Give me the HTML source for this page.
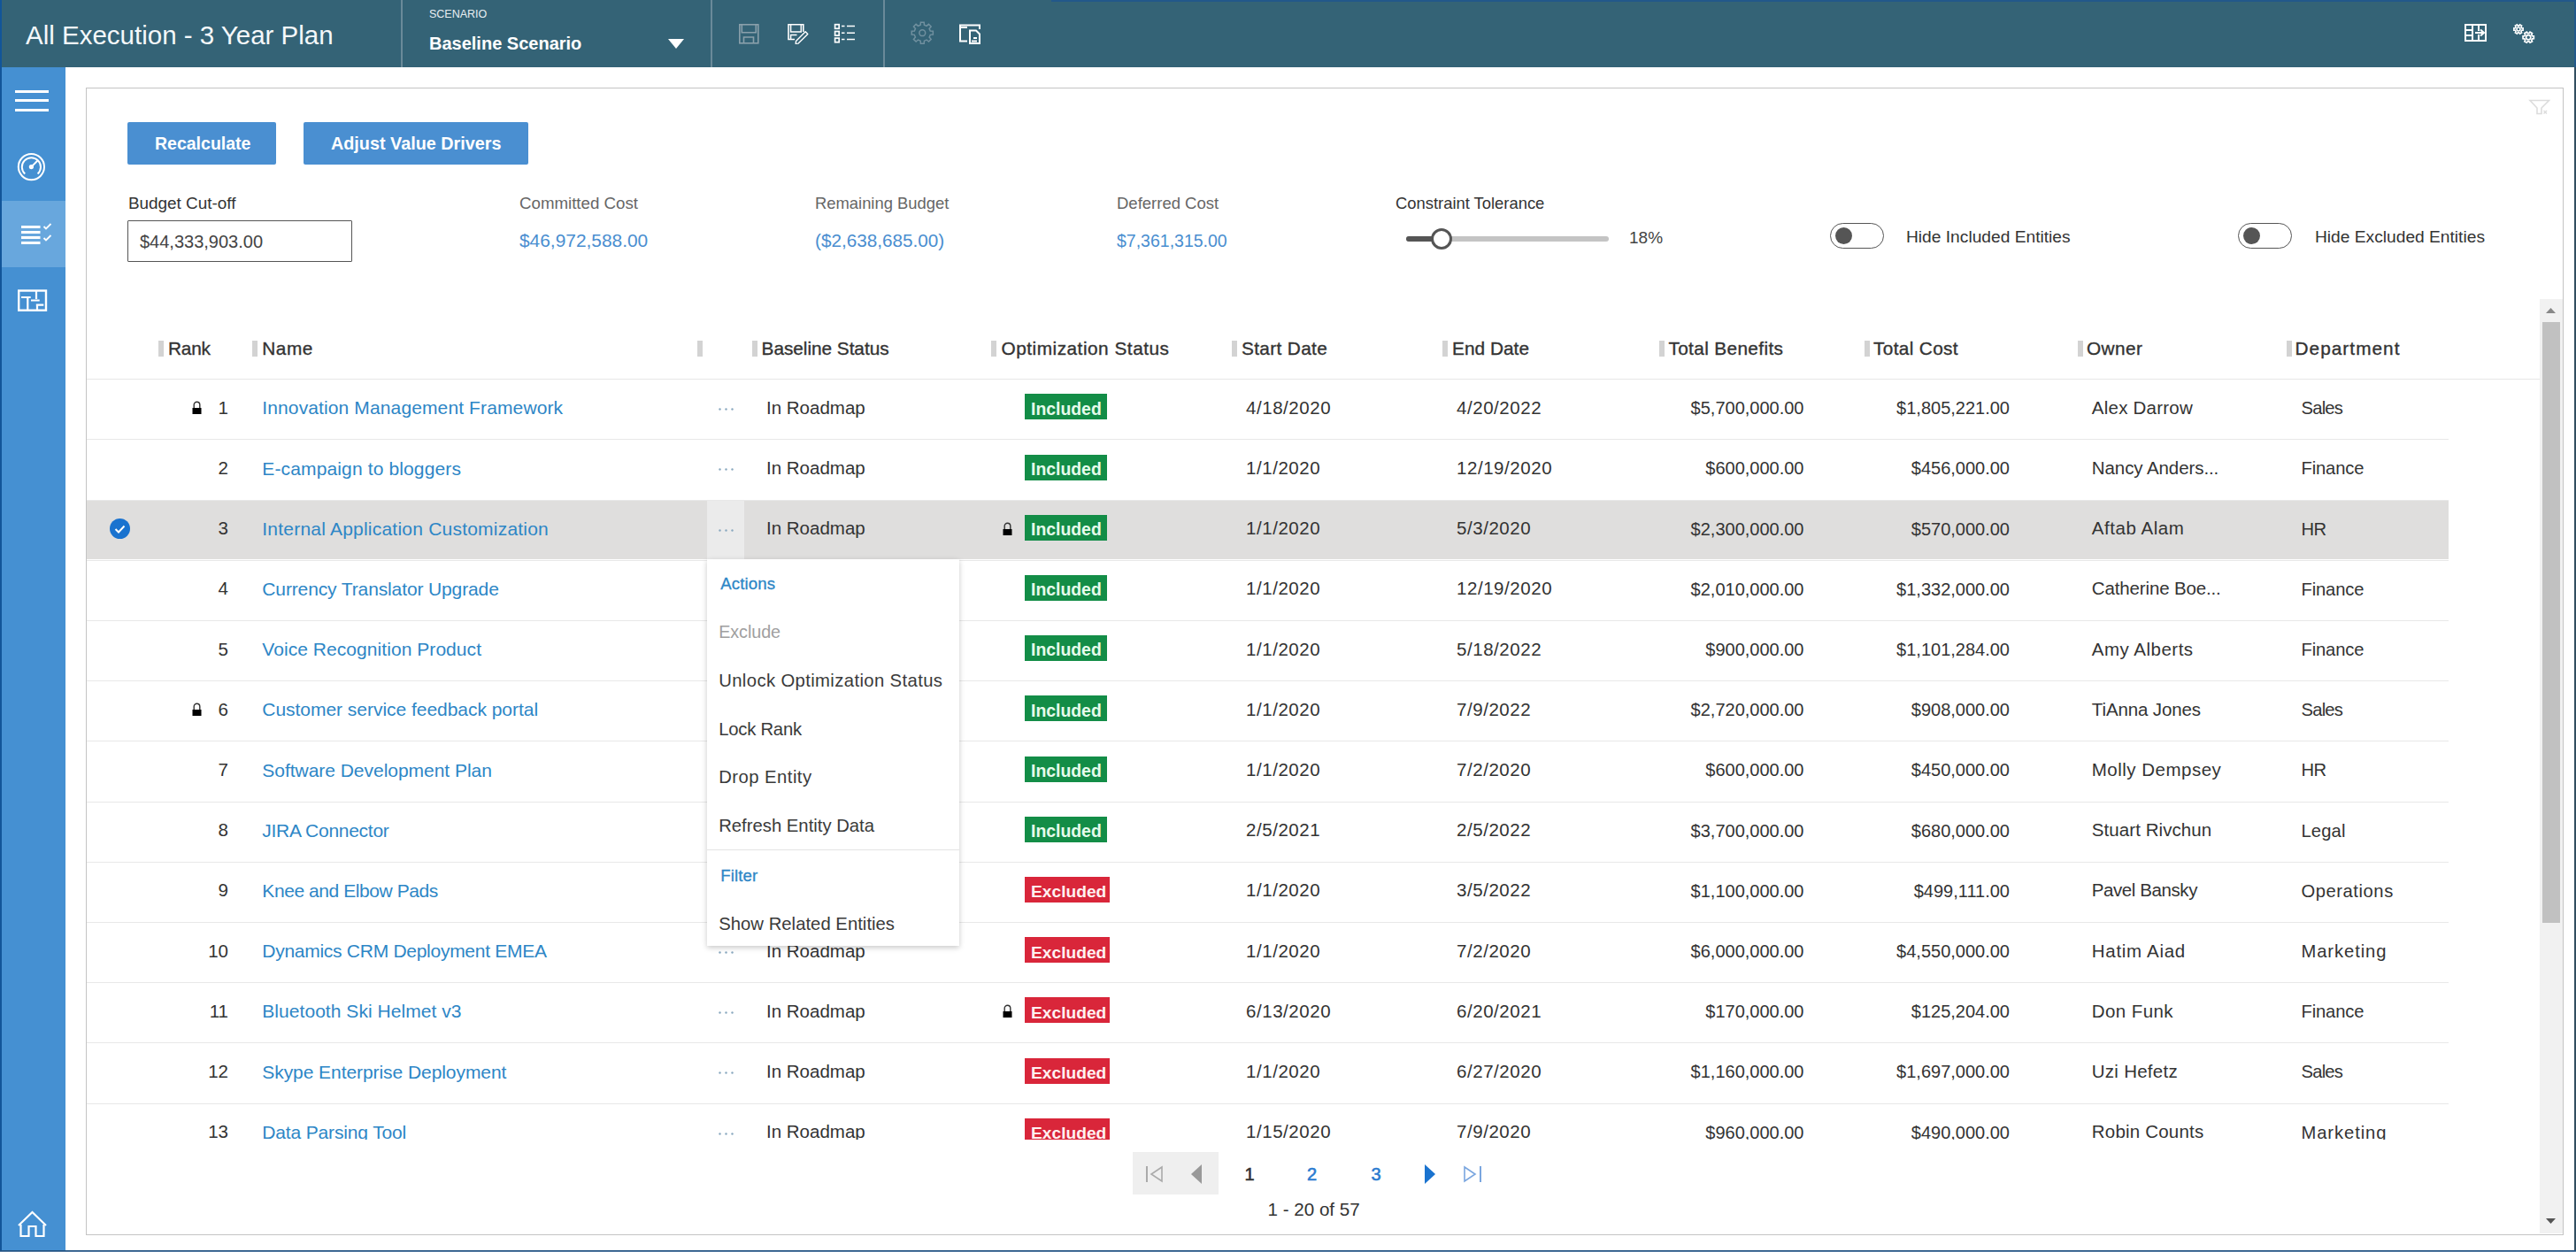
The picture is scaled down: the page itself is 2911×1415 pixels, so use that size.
<!DOCTYPE html>
<html><head><meta charset="utf-8"><title>All Execution - 3 Year Plan</title>
<style>
html,body{margin:0;padding:0}
body{width:2911px;height:1415px;position:relative;overflow:hidden;background:#fff;font-family:'Liberation Sans', sans-serif}
.t{position:absolute;white-space:nowrap}
.b{position:absolute}
svg{position:absolute;overflow:visible}
</style></head><body>

<div class="b" style="left:0px;top:0px;width:2911px;height:76px;background:#346376;"></div>
<div class="b" style="left:1188px;top:0px;width:1723px;height:2px;background:#22588a;"></div>
<div class="b" style="left:0px;top:76px;width:74px;height:1339px;background:#4590d2;"></div>
<div class="b" style="left:2px;top:227px;width:72px;height:75px;background:#68a7dd;"></div>
<div class="b" style="left:0px;top:0px;width:2px;height:1415px;background:#125599;"></div>
<div class="b" style="left:2909px;top:0px;width:2px;height:76px;background:#23598b;"></div>
<div class="b" style="left:2909px;top:76px;width:2px;height:1339px;background:#324f60;"></div>
<div class="b" style="left:0px;top:1413px;width:2911px;height:1px;background:#1f5080;"></div>
<div class="b" style="left:0px;top:1414px;width:2911px;height:1px;background:#5c80a6;"></div>
<div class="b" style="left:453px;top:0px;width:1.5px;height:76px;background:#6a8a99;"></div>
<div class="b" style="left:803px;top:0px;width:1.5px;height:76px;background:#6a8a99;"></div>
<div class="b" style="left:998px;top:0px;width:1.5px;height:76px;background:#6a8a99;"></div>
<div class="t" style="left:29px;top:25.03px;font-size:29.5px;line-height:29.5px;color:#f4f8fa;font-weight:normal;">All Execution - 3 Year Plan</div>
<div class="t" style="left:485px;top:10.42px;font-size:12.5px;line-height:12.5px;color:#e8eef2;font-weight:normal;">SCENARIO</div>
<div class="t" style="left:485px;top:39.07px;font-size:20px;line-height:20px;color:#ffffff;font-weight:bold;">Baseline Scenario</div>
<svg style="left:755px;top:44px" width="18" height="11"><path d="M0 0H18L9 11Z" fill="#fff"/></svg>
<svg style="left:0;top:0" width="2911" height="76"><rect x="835.8" y="27.8" width="21" height="21" fill="none" stroke="#8aa0ab" stroke-width="1.6"/><path d="M838.3 27.8V36.8H854.3V27.8" fill="none" stroke="#8aa0ab" stroke-width="1.6"/><path d="M840.5 48.8V42H851.5V48.8" fill="none" stroke="#8aa0ab" stroke-width="1.6"/><path d="M907.8 36V27.8H891V44.5H898" fill="none" stroke="#fff" stroke-width="1.6"/><path d="M893.6 27.8V36H905.3V27.8" fill="none" stroke="#fff" stroke-width="1.5"/><path d="M893.6 44.5V39.6H900.5" fill="none" stroke="#fff" stroke-width="1.5"/><path d="M899.5 46.5L910.2 35.8L912.8 38.4L902.1 49.1L899.2 49.4Z" fill="none" stroke="#fff" stroke-width="1.4" stroke-linejoin="round"/><rect x="943.6" y="27.7" width="4.6" height="4.6" fill="none" stroke="#fff" stroke-width="1.7"/><rect x="943.6" y="35.5" width="4.6" height="4.6" fill="none" stroke="#fff" stroke-width="1.7"/><rect x="943.6" y="43.1" width="4.6" height="4.6" fill="none" stroke="#fff" stroke-width="1.7"/><path d="M951 29.5H954.5M957 29.5H966M951 37.2H954.5M957 37.2H966M951 44.5H954.5M957 44.5H966" stroke="#fff" stroke-width="1.5"/><path d="M1054.35 35.29 L1054.35 39.11 L1051.25 39.35 L1050.14 42.01 L1052.17 44.37 L1049.47 47.07 L1047.11 45.04 L1044.45 46.15 L1044.21 49.25 L1040.39 49.25 L1040.15 46.15 L1037.49 45.04 L1035.13 47.07 L1032.43 44.37 L1034.46 42.01 L1033.35 39.35 L1030.25 39.11 L1030.25 35.29 L1033.35 35.05 L1034.46 32.39 L1032.43 30.03 L1035.13 27.33 L1037.49 29.36 L1040.15 28.25 L1040.39 25.15 L1044.21 25.15 L1044.45 28.25 L1047.11 29.36 L1049.47 27.33 L1052.17 30.03 L1050.14 32.39 L1051.25 35.05Z" fill="none" stroke="#70909f" stroke-width="1.5" stroke-linejoin="miter"/><circle cx="1042.3" cy="37.2" r="3.4" fill="none" stroke="#70909f" stroke-width="1.5"/><path d="M1093 46.5H1085V28.5H1107V33" fill="none" stroke="#fff" stroke-width="2"/><path d="M1085 31H1093" stroke="#fff" stroke-width="2"/><path d="M1096 34.5H1103L1107 38.5V49H1096Z" fill="none" stroke="#fff" stroke-width="2"/><path d="M1100 43H1104M1098 46.5H1104" stroke="#fff" stroke-width="1.8"/><rect x="2786" y="28" width="23" height="18" fill="none" stroke="#fff" stroke-width="2"/><path d="M2794 28V46M2786 34H2794M2786 40H2794M2801 28V35M2801 39V46" stroke="#fff" stroke-width="2"/><path d="M2797 37H2806M2803 33.5L2807 37L2803 40.5" fill="none" stroke="#fff" stroke-width="2"/><path d="M2851.16 31.79 L2851.16 34.21 L2849.67 34.32 L2848.98 35.52 L2849.63 36.86 L2847.53 38.07 L2846.69 36.84 L2845.31 36.84 L2844.47 38.07 L2842.37 36.86 L2843.02 35.52 L2842.33 34.32 L2840.84 34.21 L2840.84 31.79 L2842.33 31.68 L2843.02 30.48 L2842.37 29.14 L2844.47 27.93 L2845.31 29.16 L2846.69 29.16 L2847.53 27.93 L2849.63 29.14 L2848.98 30.48 L2849.67 31.68Z" fill="none" stroke="#fff" stroke-width="1.6" stroke-linejoin="miter"/><circle cx="2846" cy="33" r="2.0" fill="none" stroke="#fff" stroke-width="1.6"/><path d="M2863.33 40.76 L2863.33 43.64 L2861.62 43.79 L2860.79 45.23 L2861.51 46.79 L2859.02 48.23 L2858.03 46.83 L2856.37 46.83 L2855.38 48.23 L2852.89 46.79 L2853.61 45.23 L2852.78 43.79 L2851.07 43.64 L2851.07 40.76 L2852.78 40.61 L2853.61 39.17 L2852.89 37.61 L2855.38 36.17 L2856.37 37.57 L2858.03 37.57 L2859.02 36.17 L2861.51 37.61 L2860.79 39.17 L2861.62 40.61Z" fill="none" stroke="#fff" stroke-width="1.7" stroke-linejoin="miter"/><circle cx="2857.2" cy="42.2" r="2.6" fill="none" stroke="#fff" stroke-width="1.7"/></svg>
<svg style="left:0;top:76px" width="74" height="1339" viewBox="0 76 74 1339"><rect x="17" y="102" width="38" height="3" fill="#fff"/><rect x="17" y="112" width="38" height="3" fill="#fff"/><rect x="17" y="123" width="38" height="3" fill="#fff"/><circle cx="35.4" cy="188.6" r="14.6" fill="none" stroke="#fff" stroke-width="2"/><path d="M28.2 196.6A10.6 10.6 0 1 1 42.6 196.6" fill="none" stroke="#fff" stroke-width="2"/><path d="M35.4 188.6L43 181" stroke="#fff" stroke-width="2"/><circle cx="35.4" cy="188.6" r="2.6" fill="#fff"/><path d="M24 256.5H45.5M24 262.5H45.5M24 268.5H45.5M24 274.5H45.5" stroke="#fff" stroke-width="3"/><path d="M49.5 256L52 258.5L57.5 253M49.5 269L52 271.5L57.5 266" fill="none" stroke="#fff" stroke-width="1.8"/><rect x="21.2" y="328.5" width="30.8" height="22.2" fill="none" stroke="#fff" stroke-width="2.4"/><path d="M24 336H34.7M31.3 337V351M41 328V338M35 339.5H44.7M40.8 344.6H49.3M42 345.5V351" stroke="#fff" stroke-width="2.2"/><path d="M23.5 1384V1397H32.5V1386H40.5V1397H49.5V1384" fill="none" stroke="#fff" stroke-width="2.2"/><path d="M21 1385L36.5 1370L52 1385" fill="none" stroke="#fff" stroke-width="2.2"/></svg>
<svg style="left:2855px;top:110px" width="30" height="22" viewBox="2855 110 30 22"><path d="M2859 113.5H2880.5L2872 122V128.5H2867V122Z" fill="none" stroke="#dcdcdc" stroke-width="1.6"/><path d="M2874.5 125L2878 128.5M2878 125L2874.5 128.5" stroke="#dcdcdc" stroke-width="1.4"/></svg>
<div class="b" style="left:97px;top:99px;width:2798px;height:1295px;border:1px solid #c4c4c4;box-sizing:content-box"></div>
<div class="b" style="left:144px;top:138px;width:168px;height:48px;background:#4a8fd1;border-radius:2px"></div>
<div class="b" style="left:343px;top:138px;width:254px;height:48px;background:#4a8fd1;border-radius:2px"></div>
<div class="t" style="left:175px;top:153.49px;font-size:19.5px;line-height:19.5px;color:#fff;font-weight:bold;">Recalculate</div>
<div class="t" style="left:374px;top:153.24px;font-size:19.8px;line-height:19.8px;color:#fff;font-weight:bold;">Adjust Value Drivers</div>
<div class="t" style="left:145px;top:221.00px;font-size:18.9px;line-height:18.9px;color:#333;font-weight:normal;">Budget Cut-off</div>
<div class="b" style="left:144px;top:249px;width:252px;height:45px;border:1px solid #555;border-radius:1px"></div>
<div class="t" style="left:158px;top:263.07px;font-size:20px;line-height:20px;color:#444;font-weight:normal;">$44,333,903.00</div>
<div class="t" style="left:587px;top:221.17px;font-size:18.7px;line-height:18.7px;color:#666;font-weight:normal;">Committed Cost</div>
<div class="t" style="left:587px;top:262.31px;font-size:20.9px;line-height:20.9px;color:#4a8ed0;font-weight:normal;">$46,972,588.00</div>
<div class="t" style="left:921px;top:221.42px;font-size:18.4px;line-height:18.4px;color:#666;font-weight:normal;">Remaining Budget</div>
<div class="t" style="left:921px;top:262.48px;font-size:20.7px;line-height:20.7px;color:#4a8ed0;font-weight:normal;">($2,638,685.00)</div>
<div class="t" style="left:1262px;top:221.34px;font-size:18.5px;line-height:18.5px;color:#666;font-weight:normal;">Deferred Cost</div>
<div class="t" style="left:1262px;top:263.49px;font-size:19.5px;line-height:19.5px;color:#4a8ed0;font-weight:normal;">$7,361,315.00</div>
<div class="t" style="left:1577px;top:221.42px;font-size:18.4px;line-height:18.4px;color:#333;font-weight:normal;">Constraint Tolerance</div>
<div class="b" style="left:1589px;top:267px;width:229px;height:6px;background:#c4c4c4;border-radius:3px"></div>
<div class="b" style="left:1589px;top:267px;width:40px;height:6px;background:#555;border-radius:3px"></div>
<div class="b" style="left:1617px;top:258px;width:18px;height:18px;border:3px solid #555;border-radius:50%;background:#fff"></div>
<div class="t" style="left:1841px;top:258.92px;font-size:19px;line-height:19px;color:#444;font-weight:normal;">18%</div>
<div class="b" style="left:2068px;top:252px;width:59px;height:27px;border:1.5px solid #555;border-radius:15px"></div>
<div class="b" style="left:2074px;top:257px;width:19px;height:19px;border-radius:50%;background:#555"></div>
<div class="t" style="left:2154px;top:258.35px;font-size:19.2px;line-height:19.2px;color:#333;font-weight:normal;">Hide Included Entities</div>
<div class="b" style="left:2529px;top:252px;width:59px;height:27px;border:1.5px solid #555;border-radius:15px"></div>
<div class="b" style="left:2535px;top:257px;width:19px;height:19px;border-radius:50%;background:#555"></div>
<div class="t" style="left:2616px;top:258.35px;font-size:19.2px;line-height:19.2px;color:#333;font-weight:normal;">Hide Excluded Entities</div>
<div class="b" style="left:179px;top:385px;width:6px;height:18px;background:#d3d3d3;"></div>
<div class="b" style="left:285px;top:385px;width:6px;height:18px;background:#d3d3d3;"></div>
<div class="b" style="left:788px;top:385px;width:6px;height:18px;background:#d3d3d3;"></div>
<div class="b" style="left:849.5px;top:385px;width:6px;height:18px;background:#d3d3d3;"></div>
<div class="b" style="left:1120.3px;top:385px;width:6px;height:18px;background:#d3d3d3;"></div>
<div class="b" style="left:1392.2px;top:385px;width:6px;height:18px;background:#d3d3d3;"></div>
<div class="b" style="left:1630px;top:385px;width:6px;height:18px;background:#d3d3d3;"></div>
<div class="b" style="left:1874.5px;top:385px;width:6px;height:18px;background:#d3d3d3;"></div>
<div class="b" style="left:2106.5px;top:385px;width:6px;height:18px;background:#d3d3d3;"></div>
<div class="b" style="left:2347.7px;top:385px;width:6px;height:18px;background:#d3d3d3;"></div>
<div class="b" style="left:2584px;top:385px;width:6px;height:18px;background:#d3d3d3;"></div>
<div class="t" style="left:190px;top:384.39px;font-size:20.8px;line-height:20.8px;color:#333;font-weight:normal;letter-spacing:-0.190px;-webkit-text-stroke:0.35px #333">Rank</div>
<div class="t" style="left:296.3px;top:384.39px;font-size:20.8px;line-height:20.8px;color:#333;font-weight:normal;letter-spacing:0.502px;-webkit-text-stroke:0.35px #333">Name</div>
<div class="t" style="left:860.6px;top:384.39px;font-size:20.8px;line-height:20.8px;color:#333;font-weight:normal;letter-spacing:-0.039px;-webkit-text-stroke:0.35px #333">Baseline Status</div>
<div class="t" style="left:1131.5px;top:384.39px;font-size:20.8px;line-height:20.8px;color:#333;font-weight:normal;letter-spacing:0.508px;-webkit-text-stroke:0.35px #333">Optimization Status</div>
<div class="t" style="left:1403px;top:384.39px;font-size:20.8px;line-height:20.8px;color:#333;font-weight:normal;letter-spacing:0.350px;-webkit-text-stroke:0.35px #333">Start Date</div>
<div class="t" style="left:1641px;top:384.39px;font-size:20.8px;line-height:20.8px;color:#333;font-weight:normal;letter-spacing:0.039px;-webkit-text-stroke:0.35px #333">End Date</div>
<div class="t" style="left:1885.4px;top:384.39px;font-size:20.8px;line-height:20.8px;color:#333;font-weight:normal;letter-spacing:0.363px;-webkit-text-stroke:0.35px #333">Total Benefits</div>
<div class="t" style="left:2117px;top:384.39px;font-size:20.8px;line-height:20.8px;color:#333;font-weight:normal;letter-spacing:0.345px;-webkit-text-stroke:0.35px #333">Total Cost</div>
<div class="t" style="left:2358px;top:384.39px;font-size:20.8px;line-height:20.8px;color:#333;font-weight:normal;letter-spacing:0.434px;-webkit-text-stroke:0.35px #333">Owner</div>
<div class="t" style="left:2593.5px;top:384.39px;font-size:20.8px;line-height:20.8px;color:#333;font-weight:normal;letter-spacing:1.036px;-webkit-text-stroke:0.35px #333">Department</div>
<div class="b" style="left:98px;top:428px;width:2772px;height:1px;background:#e6e6e6;"></div>
<div class="b" style="left:98px;top:429px;width:2772px;height:859px;overflow:hidden">
<svg style="left:117.5px;top:24.2px" width="13" height="15" viewBox="0 0 13 15"><path d="M3.2 8.2V4.6a3.3 3.3 0 0 1 6.6 0V8.2" fill="none" stroke="#333" stroke-width="1.4"/><rect x="1.5" y="8" width="10" height="7" fill="#000"/></svg>
<div class="t" style="right:2612px;top:21.85px;font-size:20.5px;line-height:20.5px;color:#333;font-weight:normal;">1</div>
<div class="t" style="left:198.3px;top:21.42px;font-size:21px;line-height:21px;color:#2d86c6;font-weight:normal;letter-spacing:0.121px;">Innovation Management Framework</div>
<svg style="left:714px;top:32.2px" width="18" height="3"><circle cx="1.5" cy="1.5" r="1.2" fill="#8aa9c0"/><circle cx="8.5" cy="1.5" r="1.2" fill="#8aa9c0"/><circle cx="15.5" cy="1.5" r="1.2" fill="#8aa9c0"/></svg>
<div class="t" style="left:768px;top:21.85px;font-size:20.5px;line-height:20.5px;color:#333;font-weight:normal;">In Roadmap</div>
<div class="b" style="left:1060px;top:16.4px;width:93px;height:29px;background:#138d47"></div>
<div class="t" style="left:1067px;top:23.58px;font-size:19.4px;line-height:19.4px;color:#e6fbec;font-weight:bold;">Included</div>
<div class="t" style="left:1310px;top:21.85px;font-size:20.5px;line-height:20.5px;color:#333;font-weight:normal;letter-spacing:0.55px">4/18/2020</div>
<div class="t" style="left:1548px;top:21.85px;font-size:20.5px;line-height:20.5px;color:#333;font-weight:normal;letter-spacing:0.55px">4/20/2022</div>
<div class="t" style="right:831.5px;top:22.27px;font-size:20px;line-height:20px;color:#333;font-weight:normal;">$5,700,000.00</div>
<div class="t" style="right:599px;top:22.27px;font-size:20px;line-height:20px;color:#333;font-weight:normal;">$1,805,221.00</div>
<div class="t" style="left:2265.8px;top:21.85px;font-size:20.5px;line-height:20.5px;color:#333;font-weight:normal;letter-spacing:0.236px;">Alex Darrow</div>
<div class="t" style="left:2502.5px;top:22.10px;font-size:20.2px;line-height:20.2px;color:#333;font-weight:normal;letter-spacing:-0.783px;">Sales</div>
<div class="b" style="left:0px;top:67px;width:2669px;height:1px;background:#e8e8e8"></div>
<div class="t" style="right:2612px;top:90.05px;font-size:20.5px;line-height:20.5px;color:#333;font-weight:normal;">2</div>
<div class="t" style="left:198.3px;top:89.62px;font-size:21px;line-height:21px;color:#2d86c6;font-weight:normal;letter-spacing:0.134px;">E-campaign to bloggers</div>
<svg style="left:714px;top:100.4px" width="18" height="3"><circle cx="1.5" cy="1.5" r="1.2" fill="#8aa9c0"/><circle cx="8.5" cy="1.5" r="1.2" fill="#8aa9c0"/><circle cx="15.5" cy="1.5" r="1.2" fill="#8aa9c0"/></svg>
<div class="t" style="left:768px;top:90.05px;font-size:20.5px;line-height:20.5px;color:#333;font-weight:normal;">In Roadmap</div>
<div class="b" style="left:1060px;top:84.6px;width:93px;height:29px;background:#138d47"></div>
<div class="t" style="left:1067px;top:91.78px;font-size:19.4px;line-height:19.4px;color:#e6fbec;font-weight:bold;">Included</div>
<div class="t" style="left:1310px;top:90.05px;font-size:20.5px;line-height:20.5px;color:#333;font-weight:normal;letter-spacing:0.55px">1/1/2020</div>
<div class="t" style="left:1548px;top:90.05px;font-size:20.5px;line-height:20.5px;color:#333;font-weight:normal;letter-spacing:0.55px">12/19/2020</div>
<div class="t" style="right:831.5px;top:90.47px;font-size:20px;line-height:20px;color:#333;font-weight:normal;">$600,000.00</div>
<div class="t" style="right:599px;top:90.47px;font-size:20px;line-height:20px;color:#333;font-weight:normal;">$456,000.00</div>
<div class="t" style="left:2265.8px;top:90.05px;font-size:20.5px;line-height:20.5px;color:#333;font-weight:normal;letter-spacing:-0.087px;">Nancy Anders...</div>
<div class="t" style="left:2502.5px;top:90.30px;font-size:20.2px;line-height:20.2px;color:#333;font-weight:normal;letter-spacing:-0.145px;">Finance</div>
<div class="b" style="left:0px;top:137px;width:2669px;height:66px;background:#dfdedd"></div>
<div class="b" style="left:701px;top:137px;width:42px;height:66px;background:#ebebeb"></div>
<div class="b" style="left:0px;top:136px;width:2669px;height:1px;background:#e8e8e8"></div>
<div class="b" style="left:25.5px;top:157.1px;width:23px;height:23px;border-radius:50%;background:#1a73cf"></div>
<svg style="left:25.5px;top:157.1px" width="23" height="23"><path d="M6.5 12l3.5 3.5 6.5-7" fill="none" stroke="#fff" stroke-width="2"/></svg>
<div class="t" style="right:2612px;top:158.25px;font-size:20.5px;line-height:20.5px;color:#333;font-weight:normal;">3</div>
<div class="t" style="left:198.3px;top:157.82px;font-size:21px;line-height:21px;color:#2d86c6;font-weight:normal;letter-spacing:0.217px;">Internal Application Customization</div>
<svg style="left:714px;top:168.6px" width="18" height="3"><circle cx="1.5" cy="1.5" r="1.2" fill="#8aa9c0"/><circle cx="8.5" cy="1.5" r="1.2" fill="#8aa9c0"/><circle cx="15.5" cy="1.5" r="1.2" fill="#8aa9c0"/></svg>
<div class="t" style="left:768px;top:158.25px;font-size:20.5px;line-height:20.5px;color:#333;font-weight:normal;">In Roadmap</div>
<svg style="left:1034px;top:160.6px" width="13" height="15" viewBox="0 0 13 15"><path d="M3.2 8.2V4.6a3.3 3.3 0 0 1 6.6 0V8.2" fill="none" stroke="#333" stroke-width="1.4"/><rect x="1.5" y="8" width="10" height="7" fill="#000"/></svg>
<div class="b" style="left:1060px;top:152.8px;width:93px;height:29px;background:#138d47"></div>
<div class="t" style="left:1067px;top:159.98px;font-size:19.4px;line-height:19.4px;color:#e6fbec;font-weight:bold;">Included</div>
<div class="t" style="left:1310px;top:158.25px;font-size:20.5px;line-height:20.5px;color:#333;font-weight:normal;letter-spacing:0.55px">1/1/2020</div>
<div class="t" style="left:1548px;top:158.25px;font-size:20.5px;line-height:20.5px;color:#333;font-weight:normal;letter-spacing:0.55px">5/3/2020</div>
<div class="t" style="right:831.5px;top:158.67px;font-size:20px;line-height:20px;color:#333;font-weight:normal;">$2,300,000.00</div>
<div class="t" style="right:599px;top:158.67px;font-size:20px;line-height:20px;color:#333;font-weight:normal;">$570,000.00</div>
<div class="t" style="left:2265.8px;top:158.25px;font-size:20.5px;line-height:20.5px;color:#333;font-weight:normal;letter-spacing:0.540px;">Aftab Alam</div>
<div class="t" style="left:2502.5px;top:158.50px;font-size:20.2px;line-height:20.2px;color:#333;font-weight:normal;letter-spacing:-0.680px;">HR</div>
<div class="b" style="left:0px;top:204px;width:2669px;height:1px;background:#e8e8e8"></div>
<div class="t" style="right:2612px;top:226.45px;font-size:20.5px;line-height:20.5px;color:#333;font-weight:normal;">4</div>
<div class="t" style="left:198.3px;top:226.02px;font-size:21px;line-height:21px;color:#2d86c6;font-weight:normal;letter-spacing:-0.126px;">Currency Translator Upgrade</div>
<svg style="left:714px;top:236.8px" width="18" height="3"><circle cx="1.5" cy="1.5" r="1.2" fill="#8aa9c0"/><circle cx="8.5" cy="1.5" r="1.2" fill="#8aa9c0"/><circle cx="15.5" cy="1.5" r="1.2" fill="#8aa9c0"/></svg>
<div class="t" style="left:768px;top:226.45px;font-size:20.5px;line-height:20.5px;color:#333;font-weight:normal;">In Roadmap</div>
<div class="b" style="left:1060px;top:221.0px;width:93px;height:29px;background:#138d47"></div>
<div class="t" style="left:1067px;top:228.18px;font-size:19.4px;line-height:19.4px;color:#e6fbec;font-weight:bold;">Included</div>
<div class="t" style="left:1310px;top:226.45px;font-size:20.5px;line-height:20.5px;color:#333;font-weight:normal;letter-spacing:0.55px">1/1/2020</div>
<div class="t" style="left:1548px;top:226.45px;font-size:20.5px;line-height:20.5px;color:#333;font-weight:normal;letter-spacing:0.55px">12/19/2020</div>
<div class="t" style="right:831.5px;top:226.87px;font-size:20px;line-height:20px;color:#333;font-weight:normal;">$2,010,000.00</div>
<div class="t" style="right:599px;top:226.87px;font-size:20px;line-height:20px;color:#333;font-weight:normal;">$1,332,000.00</div>
<div class="t" style="left:2265.8px;top:226.45px;font-size:20.5px;line-height:20.5px;color:#333;font-weight:normal;letter-spacing:-0.143px;">Catherine Boe...</div>
<div class="t" style="left:2502.5px;top:226.70px;font-size:20.2px;line-height:20.2px;color:#333;font-weight:normal;letter-spacing:-0.145px;">Finance</div>
<div class="b" style="left:0px;top:272px;width:2669px;height:1px;background:#e8e8e8"></div>
<div class="t" style="right:2612px;top:294.65px;font-size:20.5px;line-height:20.5px;color:#333;font-weight:normal;">5</div>
<div class="t" style="left:198.3px;top:294.22px;font-size:21px;line-height:21px;color:#2d86c6;font-weight:normal;letter-spacing:0.057px;">Voice Recognition Product</div>
<svg style="left:714px;top:305.0px" width="18" height="3"><circle cx="1.5" cy="1.5" r="1.2" fill="#8aa9c0"/><circle cx="8.5" cy="1.5" r="1.2" fill="#8aa9c0"/><circle cx="15.5" cy="1.5" r="1.2" fill="#8aa9c0"/></svg>
<div class="t" style="left:768px;top:294.65px;font-size:20.5px;line-height:20.5px;color:#333;font-weight:normal;">In Roadmap</div>
<div class="b" style="left:1060px;top:289.2px;width:93px;height:29px;background:#138d47"></div>
<div class="t" style="left:1067px;top:296.38px;font-size:19.4px;line-height:19.4px;color:#e6fbec;font-weight:bold;">Included</div>
<div class="t" style="left:1310px;top:294.65px;font-size:20.5px;line-height:20.5px;color:#333;font-weight:normal;letter-spacing:0.55px">1/1/2020</div>
<div class="t" style="left:1548px;top:294.65px;font-size:20.5px;line-height:20.5px;color:#333;font-weight:normal;letter-spacing:0.55px">5/18/2022</div>
<div class="t" style="right:831.5px;top:295.07px;font-size:20px;line-height:20px;color:#333;font-weight:normal;">$900,000.00</div>
<div class="t" style="right:599px;top:295.07px;font-size:20px;line-height:20px;color:#333;font-weight:normal;">$1,101,284.00</div>
<div class="t" style="left:2265.8px;top:294.65px;font-size:20.5px;line-height:20.5px;color:#333;font-weight:normal;letter-spacing:0.493px;">Amy Alberts</div>
<div class="t" style="left:2502.5px;top:294.90px;font-size:20.2px;line-height:20.2px;color:#333;font-weight:normal;letter-spacing:-0.145px;">Finance</div>
<div class="b" style="left:0px;top:340px;width:2669px;height:1px;background:#e8e8e8"></div>
<svg style="left:117.5px;top:365.2px" width="13" height="15" viewBox="0 0 13 15"><path d="M3.2 8.2V4.6a3.3 3.3 0 0 1 6.6 0V8.2" fill="none" stroke="#333" stroke-width="1.4"/><rect x="1.5" y="8" width="10" height="7" fill="#000"/></svg>
<div class="t" style="right:2612px;top:362.85px;font-size:20.5px;line-height:20.5px;color:#333;font-weight:normal;">6</div>
<div class="t" style="left:198.3px;top:362.42px;font-size:21px;line-height:21px;color:#2d86c6;font-weight:normal;letter-spacing:-0.033px;">Customer service feedback portal</div>
<svg style="left:714px;top:373.2px" width="18" height="3"><circle cx="1.5" cy="1.5" r="1.2" fill="#8aa9c0"/><circle cx="8.5" cy="1.5" r="1.2" fill="#8aa9c0"/><circle cx="15.5" cy="1.5" r="1.2" fill="#8aa9c0"/></svg>
<div class="t" style="left:768px;top:362.85px;font-size:20.5px;line-height:20.5px;color:#333;font-weight:normal;">In Roadmap</div>
<div class="b" style="left:1060px;top:357.4px;width:93px;height:29px;background:#138d47"></div>
<div class="t" style="left:1067px;top:364.58px;font-size:19.4px;line-height:19.4px;color:#e6fbec;font-weight:bold;">Included</div>
<div class="t" style="left:1310px;top:362.85px;font-size:20.5px;line-height:20.5px;color:#333;font-weight:normal;letter-spacing:0.55px">1/1/2020</div>
<div class="t" style="left:1548px;top:362.85px;font-size:20.5px;line-height:20.5px;color:#333;font-weight:normal;letter-spacing:0.55px">7/9/2022</div>
<div class="t" style="right:831.5px;top:363.27px;font-size:20px;line-height:20px;color:#333;font-weight:normal;">$2,720,000.00</div>
<div class="t" style="right:599px;top:363.27px;font-size:20px;line-height:20px;color:#333;font-weight:normal;">$908,000.00</div>
<div class="t" style="left:2265.8px;top:362.85px;font-size:20.5px;line-height:20.5px;color:#333;font-weight:normal;letter-spacing:-0.118px;">TiAnna Jones</div>
<div class="t" style="left:2502.5px;top:363.10px;font-size:20.2px;line-height:20.2px;color:#333;font-weight:normal;letter-spacing:-0.783px;">Sales</div>
<div class="b" style="left:0px;top:408px;width:2669px;height:1px;background:#e8e8e8"></div>
<div class="t" style="right:2612px;top:431.05px;font-size:20.5px;line-height:20.5px;color:#333;font-weight:normal;">7</div>
<div class="t" style="left:198.3px;top:430.62px;font-size:21px;line-height:21px;color:#2d86c6;font-weight:normal;letter-spacing:-0.030px;">Software Development Plan</div>
<svg style="left:714px;top:441.4px" width="18" height="3"><circle cx="1.5" cy="1.5" r="1.2" fill="#8aa9c0"/><circle cx="8.5" cy="1.5" r="1.2" fill="#8aa9c0"/><circle cx="15.5" cy="1.5" r="1.2" fill="#8aa9c0"/></svg>
<div class="t" style="left:768px;top:431.05px;font-size:20.5px;line-height:20.5px;color:#333;font-weight:normal;">In Roadmap</div>
<div class="b" style="left:1060px;top:425.6px;width:93px;height:29px;background:#138d47"></div>
<div class="t" style="left:1067px;top:432.78px;font-size:19.4px;line-height:19.4px;color:#e6fbec;font-weight:bold;">Included</div>
<div class="t" style="left:1310px;top:431.05px;font-size:20.5px;line-height:20.5px;color:#333;font-weight:normal;letter-spacing:0.55px">1/1/2020</div>
<div class="t" style="left:1548px;top:431.05px;font-size:20.5px;line-height:20.5px;color:#333;font-weight:normal;letter-spacing:0.55px">7/2/2020</div>
<div class="t" style="right:831.5px;top:431.47px;font-size:20px;line-height:20px;color:#333;font-weight:normal;">$600,000.00</div>
<div class="t" style="right:599px;top:431.47px;font-size:20px;line-height:20px;color:#333;font-weight:normal;">$450,000.00</div>
<div class="t" style="left:2265.8px;top:431.05px;font-size:20.5px;line-height:20.5px;color:#333;font-weight:normal;letter-spacing:0.490px;">Molly Dempsey</div>
<div class="t" style="left:2502.5px;top:431.30px;font-size:20.2px;line-height:20.2px;color:#333;font-weight:normal;letter-spacing:-0.680px;">HR</div>
<div class="b" style="left:0px;top:477px;width:2669px;height:1px;background:#e8e8e8"></div>
<div class="t" style="right:2612px;top:499.25px;font-size:20.5px;line-height:20.5px;color:#333;font-weight:normal;">8</div>
<div class="t" style="left:198.3px;top:498.82px;font-size:21px;line-height:21px;color:#2d86c6;font-weight:normal;letter-spacing:-0.276px;">JIRA Connector</div>
<svg style="left:714px;top:509.6px" width="18" height="3"><circle cx="1.5" cy="1.5" r="1.2" fill="#8aa9c0"/><circle cx="8.5" cy="1.5" r="1.2" fill="#8aa9c0"/><circle cx="15.5" cy="1.5" r="1.2" fill="#8aa9c0"/></svg>
<div class="t" style="left:768px;top:499.25px;font-size:20.5px;line-height:20.5px;color:#333;font-weight:normal;">In Roadmap</div>
<div class="b" style="left:1060px;top:493.8px;width:93px;height:29px;background:#138d47"></div>
<div class="t" style="left:1067px;top:500.98px;font-size:19.4px;line-height:19.4px;color:#e6fbec;font-weight:bold;">Included</div>
<div class="t" style="left:1310px;top:499.25px;font-size:20.5px;line-height:20.5px;color:#333;font-weight:normal;letter-spacing:0.55px">2/5/2021</div>
<div class="t" style="left:1548px;top:499.25px;font-size:20.5px;line-height:20.5px;color:#333;font-weight:normal;letter-spacing:0.55px">2/5/2022</div>
<div class="t" style="right:831.5px;top:499.67px;font-size:20px;line-height:20px;color:#333;font-weight:normal;">$3,700,000.00</div>
<div class="t" style="right:599px;top:499.67px;font-size:20px;line-height:20px;color:#333;font-weight:normal;">$680,000.00</div>
<div class="t" style="left:2265.8px;top:499.25px;font-size:20.5px;line-height:20.5px;color:#333;font-weight:normal;letter-spacing:0.073px;">Stuart Rivchun</div>
<div class="t" style="left:2502.5px;top:499.50px;font-size:20.2px;line-height:20.2px;color:#333;font-weight:normal;letter-spacing:0.143px;">Legal</div>
<div class="b" style="left:0px;top:545px;width:2669px;height:1px;background:#e8e8e8"></div>
<div class="t" style="right:2612px;top:567.45px;font-size:20.5px;line-height:20.5px;color:#333;font-weight:normal;">9</div>
<div class="t" style="left:198.3px;top:567.02px;font-size:21px;line-height:21px;color:#2d86c6;font-weight:normal;letter-spacing:-0.425px;">Knee and Elbow Pads</div>
<svg style="left:714px;top:577.8px" width="18" height="3"><circle cx="1.5" cy="1.5" r="1.2" fill="#8aa9c0"/><circle cx="8.5" cy="1.5" r="1.2" fill="#8aa9c0"/><circle cx="15.5" cy="1.5" r="1.2" fill="#8aa9c0"/></svg>
<div class="t" style="left:768px;top:567.45px;font-size:20.5px;line-height:20.5px;color:#333;font-weight:normal;">In Roadmap</div>
<div class="b" style="left:1060px;top:562.0px;width:96px;height:29px;background:#d9263a"></div>
<div class="t" style="left:1067px;top:569.35px;font-size:19.2px;line-height:19.2px;color:#fff0f0;font-weight:bold;">Excluded</div>
<div class="t" style="left:1310px;top:567.45px;font-size:20.5px;line-height:20.5px;color:#333;font-weight:normal;letter-spacing:0.55px">1/1/2020</div>
<div class="t" style="left:1548px;top:567.45px;font-size:20.5px;line-height:20.5px;color:#333;font-weight:normal;letter-spacing:0.55px">3/5/2022</div>
<div class="t" style="right:831.5px;top:567.87px;font-size:20px;line-height:20px;color:#333;font-weight:normal;">$1,100,000.00</div>
<div class="t" style="right:599px;top:567.87px;font-size:20px;line-height:20px;color:#333;font-weight:normal;">$499,111.00</div>
<div class="t" style="left:2265.8px;top:567.45px;font-size:20.5px;line-height:20.5px;color:#333;font-weight:normal;letter-spacing:-0.418px;">Pavel Bansky</div>
<div class="t" style="left:2502.5px;top:567.70px;font-size:20.2px;line-height:20.2px;color:#333;font-weight:normal;letter-spacing:0.553px;">Operations</div>
<div class="b" style="left:0px;top:613px;width:2669px;height:1px;background:#e8e8e8"></div>
<div class="t" style="right:2612px;top:635.65px;font-size:20.5px;line-height:20.5px;color:#333;font-weight:normal;">10</div>
<div class="t" style="left:198.3px;top:635.22px;font-size:21px;line-height:21px;color:#2d86c6;font-weight:normal;letter-spacing:-0.274px;">Dynamics CRM Deployment EMEA</div>
<svg style="left:714px;top:646.0px" width="18" height="3"><circle cx="1.5" cy="1.5" r="1.2" fill="#8aa9c0"/><circle cx="8.5" cy="1.5" r="1.2" fill="#8aa9c0"/><circle cx="15.5" cy="1.5" r="1.2" fill="#8aa9c0"/></svg>
<div class="t" style="left:768px;top:635.65px;font-size:20.5px;line-height:20.5px;color:#333;font-weight:normal;">In Roadmap</div>
<div class="b" style="left:1060px;top:630.2px;width:96px;height:29px;background:#d9263a"></div>
<div class="t" style="left:1067px;top:637.55px;font-size:19.2px;line-height:19.2px;color:#fff0f0;font-weight:bold;">Excluded</div>
<div class="t" style="left:1310px;top:635.65px;font-size:20.5px;line-height:20.5px;color:#333;font-weight:normal;letter-spacing:0.55px">1/1/2020</div>
<div class="t" style="left:1548px;top:635.65px;font-size:20.5px;line-height:20.5px;color:#333;font-weight:normal;letter-spacing:0.55px">7/2/2020</div>
<div class="t" style="right:831.5px;top:636.07px;font-size:20px;line-height:20px;color:#333;font-weight:normal;">$6,000,000.00</div>
<div class="t" style="right:599px;top:636.07px;font-size:20px;line-height:20px;color:#333;font-weight:normal;">$4,550,000.00</div>
<div class="t" style="left:2265.8px;top:635.65px;font-size:20.5px;line-height:20.5px;color:#333;font-weight:normal;letter-spacing:0.696px;">Hatim Aiad</div>
<div class="t" style="left:2502.5px;top:635.90px;font-size:20.2px;line-height:20.2px;color:#333;font-weight:normal;letter-spacing:0.914px;">Marketing</div>
<div class="b" style="left:0px;top:681px;width:2669px;height:1px;background:#e8e8e8"></div>
<div class="t" style="right:2612px;top:703.85px;font-size:20.5px;line-height:20.5px;color:#333;font-weight:normal;">11</div>
<div class="t" style="left:198.3px;top:703.42px;font-size:21px;line-height:21px;color:#2d86c6;font-weight:normal;letter-spacing:0.050px;">Bluetooth Ski Helmet v3</div>
<svg style="left:714px;top:714.2px" width="18" height="3"><circle cx="1.5" cy="1.5" r="1.2" fill="#8aa9c0"/><circle cx="8.5" cy="1.5" r="1.2" fill="#8aa9c0"/><circle cx="15.5" cy="1.5" r="1.2" fill="#8aa9c0"/></svg>
<div class="t" style="left:768px;top:703.85px;font-size:20.5px;line-height:20.5px;color:#333;font-weight:normal;">In Roadmap</div>
<svg style="left:1034px;top:706.2px" width="13" height="15" viewBox="0 0 13 15"><path d="M3.2 8.2V4.6a3.3 3.3 0 0 1 6.6 0V8.2" fill="none" stroke="#333" stroke-width="1.4"/><rect x="1.5" y="8" width="10" height="7" fill="#000"/></svg>
<div class="b" style="left:1060px;top:698.4px;width:96px;height:29px;background:#d9263a"></div>
<div class="t" style="left:1067px;top:705.75px;font-size:19.2px;line-height:19.2px;color:#fff0f0;font-weight:bold;">Excluded</div>
<div class="t" style="left:1310px;top:703.85px;font-size:20.5px;line-height:20.5px;color:#333;font-weight:normal;letter-spacing:0.55px">6/13/2020</div>
<div class="t" style="left:1548px;top:703.85px;font-size:20.5px;line-height:20.5px;color:#333;font-weight:normal;letter-spacing:0.55px">6/20/2021</div>
<div class="t" style="right:831.5px;top:704.27px;font-size:20px;line-height:20px;color:#333;font-weight:normal;">$170,000.00</div>
<div class="t" style="right:599px;top:704.27px;font-size:20px;line-height:20px;color:#333;font-weight:normal;">$125,204.00</div>
<div class="t" style="left:2265.8px;top:703.85px;font-size:20.5px;line-height:20.5px;color:#333;font-weight:normal;letter-spacing:0.402px;">Don Funk</div>
<div class="t" style="left:2502.5px;top:704.10px;font-size:20.2px;line-height:20.2px;color:#333;font-weight:normal;letter-spacing:-0.145px;">Finance</div>
<div class="b" style="left:0px;top:749px;width:2669px;height:1px;background:#e8e8e8"></div>
<div class="t" style="right:2612px;top:772.05px;font-size:20.5px;line-height:20.5px;color:#333;font-weight:normal;">12</div>
<div class="t" style="left:198.3px;top:771.62px;font-size:21px;line-height:21px;color:#2d86c6;font-weight:normal;letter-spacing:-0.066px;">Skype Enterprise Deployment</div>
<svg style="left:714px;top:782.4px" width="18" height="3"><circle cx="1.5" cy="1.5" r="1.2" fill="#8aa9c0"/><circle cx="8.5" cy="1.5" r="1.2" fill="#8aa9c0"/><circle cx="15.5" cy="1.5" r="1.2" fill="#8aa9c0"/></svg>
<div class="t" style="left:768px;top:772.05px;font-size:20.5px;line-height:20.5px;color:#333;font-weight:normal;">In Roadmap</div>
<div class="b" style="left:1060px;top:766.6px;width:96px;height:29px;background:#d9263a"></div>
<div class="t" style="left:1067px;top:773.95px;font-size:19.2px;line-height:19.2px;color:#fff0f0;font-weight:bold;">Excluded</div>
<div class="t" style="left:1310px;top:772.05px;font-size:20.5px;line-height:20.5px;color:#333;font-weight:normal;letter-spacing:0.55px">1/1/2020</div>
<div class="t" style="left:1548px;top:772.05px;font-size:20.5px;line-height:20.5px;color:#333;font-weight:normal;letter-spacing:0.55px">6/27/2020</div>
<div class="t" style="right:831.5px;top:772.47px;font-size:20px;line-height:20px;color:#333;font-weight:normal;">$1,160,000.00</div>
<div class="t" style="right:599px;top:772.47px;font-size:20px;line-height:20px;color:#333;font-weight:normal;">$1,697,000.00</div>
<div class="t" style="left:2265.8px;top:772.05px;font-size:20.5px;line-height:20.5px;color:#333;font-weight:normal;letter-spacing:0.260px;">Uzi Hefetz</div>
<div class="t" style="left:2502.5px;top:772.30px;font-size:20.2px;line-height:20.2px;color:#333;font-weight:normal;letter-spacing:-0.783px;">Sales</div>
<div class="b" style="left:0px;top:818px;width:2669px;height:1px;background:#e8e8e8"></div>
<div class="t" style="right:2612px;top:840.25px;font-size:20.5px;line-height:20.5px;color:#333;font-weight:normal;">13</div>
<div class="t" style="left:198.3px;top:839.82px;font-size:21px;line-height:21px;color:#2d86c6;font-weight:normal;letter-spacing:-0.155px;">Data Parsing Tool</div>
<svg style="left:714px;top:850.6px" width="18" height="3"><circle cx="1.5" cy="1.5" r="1.2" fill="#8aa9c0"/><circle cx="8.5" cy="1.5" r="1.2" fill="#8aa9c0"/><circle cx="15.5" cy="1.5" r="1.2" fill="#8aa9c0"/></svg>
<div class="t" style="left:768px;top:840.25px;font-size:20.5px;line-height:20.5px;color:#333;font-weight:normal;">In Roadmap</div>
<div class="b" style="left:1060px;top:834.8px;width:96px;height:29px;background:#d9263a"></div>
<div class="t" style="left:1067px;top:842.15px;font-size:19.2px;line-height:19.2px;color:#fff0f0;font-weight:bold;">Excluded</div>
<div class="t" style="left:1310px;top:840.25px;font-size:20.5px;line-height:20.5px;color:#333;font-weight:normal;letter-spacing:0.55px">1/15/2020</div>
<div class="t" style="left:1548px;top:840.25px;font-size:20.5px;line-height:20.5px;color:#333;font-weight:normal;letter-spacing:0.55px">7/9/2020</div>
<div class="t" style="right:831.5px;top:840.67px;font-size:20px;line-height:20px;color:#333;font-weight:normal;">$960,000.00</div>
<div class="t" style="right:599px;top:840.67px;font-size:20px;line-height:20px;color:#333;font-weight:normal;">$490,000.00</div>
<div class="t" style="left:2265.8px;top:840.25px;font-size:20.5px;line-height:20.5px;color:#333;font-weight:normal;letter-spacing:0.198px;">Robin Counts</div>
<div class="t" style="left:2502.5px;top:840.50px;font-size:20.2px;line-height:20.2px;color:#333;font-weight:normal;letter-spacing:0.914px;">Marketing</div>
</div>
<div class="b" style="left:2870px;top:338px;width:26px;height:1056px;background:#f1f1f1;"></div>
<div class="b" style="left:2873px;top:364px;width:20px;height:679px;background:#c1c1c1;"></div>
<svg style="left:2877px;top:348px" width="11" height="6"><path d="M0 6H11L5.5 0Z" fill="#888"/></svg>
<svg style="left:2877px;top:1377px" width="11" height="6"><path d="M0 0H11L5.5 6Z" fill="#555"/></svg>
<div class="b" style="left:1280px;top:1302px;width:97px;height:48px;background:#efefef;"></div>
<svg style="left:1295px;top:1318px" width="19" height="18"><path d="M1 0V18" stroke="#aaa" stroke-width="2"/><path d="M18 1L6 9L18 17Z" fill="none" stroke="#aaa" stroke-width="1.6"/></svg>
<svg style="left:1346px;top:1316px" width="12" height="22"><path d="M12 0V22L0 11Z" fill="#999"/></svg>
<div class="t" style="left:1406.5px;top:1317.07px;font-size:20px;line-height:20px;color:#333;font-weight:normal;-webkit-text-stroke:0.6px #333">1</div>
<div class="t" style="left:1477px;top:1317.07px;font-size:20px;line-height:20px;color:#2b7bd0;font-weight:normal;-webkit-text-stroke:0.6px #2b7bd0">2</div>
<div class="t" style="left:1549.5px;top:1317.07px;font-size:20px;line-height:20px;color:#2b7bd0;font-weight:normal;-webkit-text-stroke:0.6px #2b7bd0">3</div>
<svg style="left:1610px;top:1316px" width="12" height="22"><path d="M0 0V22L12 11Z" fill="#1a73cf"/></svg>
<svg style="left:1654px;top:1318px" width="20" height="18"><path d="M1 1L13 9L1 17Z" fill="none" stroke="#7aa6df" stroke-width="1.6"/><path d="M19 0V18" stroke="#7aa6df" stroke-width="2"/></svg>
<div class="t" style="left:1432.5px;top:1356.56px;font-size:20.6px;line-height:20.6px;color:#333;font-weight:normal;">1 - 20 of 57</div>
<div class="b" style="left:799px;top:632px;width:285px;height:437px;background:#fff;box-shadow:0 2px 6px rgba(0,0,0,0.22)"></div>
<div class="t" style="left:814.2px;top:651.26px;font-size:18.6px;line-height:18.6px;color:#2d86c6;font-weight:normal;letter-spacing:0.166px;-webkit-text-stroke:0.3px #2d86c6">Actions</div>
<div class="t" style="left:812.2px;top:705.24px;font-size:19.8px;line-height:19.8px;color:#a0a0a0;font-weight:normal;letter-spacing:-0.074px;">Exclude</div>
<div class="t" style="left:812.2px;top:758.82px;font-size:20.3px;line-height:20.3px;color:#3a3a3a;font-weight:normal;letter-spacing:0.372px;">Unlock Optimization Status</div>
<div class="t" style="left:812.2px;top:814.22px;font-size:20.3px;line-height:20.3px;color:#3a3a3a;font-weight:normal;letter-spacing:-0.240px;">Lock Rank</div>
<div class="t" style="left:812.2px;top:867.82px;font-size:20.3px;line-height:20.3px;color:#3a3a3a;font-weight:normal;letter-spacing:0.458px;">Drop Entity</div>
<div class="t" style="left:812.2px;top:922.82px;font-size:20.3px;line-height:20.3px;color:#3a3a3a;font-weight:normal;letter-spacing:-0.001px;">Refresh Entity Data</div>
<div class="b" style="left:799px;top:960px;width:285px;height:1px;background:#e4e4e4;"></div>
<div class="t" style="left:814.2px;top:981.06px;font-size:18.6px;line-height:18.6px;color:#2d86c6;font-weight:normal;letter-spacing:0.132px;-webkit-text-stroke:0.3px #2d86c6">Filter</div>
<div class="t" style="left:812.2px;top:1033.82px;font-size:20.3px;line-height:20.3px;color:#3a3a3a;font-weight:normal;letter-spacing:0.020px;">Show Related Entities</div>
</body></html>
